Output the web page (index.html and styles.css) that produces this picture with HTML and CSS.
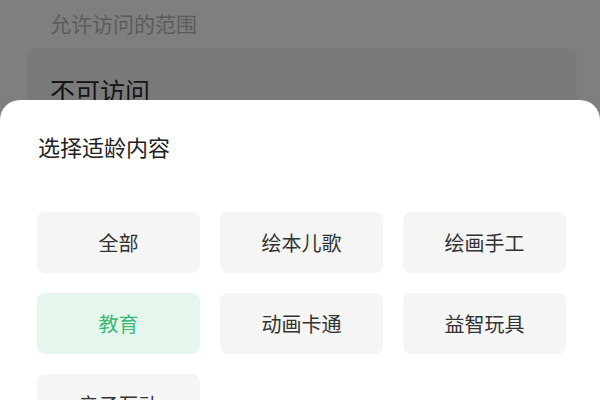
FILE: index.html
```html
<!DOCTYPE html>
<html lang="zh-CN">
<head>
    <meta charset="UTF-8">
    <meta name="viewport" content="width=device-width, initial-scale=1.0">
    <title>选择适龄内容</title>
    <link rel="stylesheet" href="styles.css">
</head>
<body>
    <div class="page">
        <div class="section-label">允许访问的范围</div>
        <div class="option-card">
            <span class="option-text">不可访问</span>
        </div>
    </div>

    <div class="mask"></div>

    <div class="sheet">
        <h2 class="sheet-title">选择适龄内容</h2>
        <div class="tag-grid">
            <div class="tag">全部</div>
            <div class="tag">绘本儿歌</div>
            <div class="tag">绘画手工</div>
            <div class="tag active">教育</div>
            <div class="tag">动画卡通</div>
            <div class="tag">益智玩具</div>
            <div class="tag">亲子互动</div>
        </div>
    </div>
</body>
</html>
```

FILE: styles.css
```css
* {
    margin: 0;
    padding: 0;
    box-sizing: border-box;
}

body {
    font-family: "Noto Sans CJK SC", "Noto Sans", sans-serif;
    background: #ffffff;
    color: #2a2a2a;
    width: 600px;
    height: 400px;
    overflow: hidden;
    position: relative;
}

/* Page behind the bottom sheet */
.page {
    padding: 8px 23px 0 27px;
}

.section-label {
    font-size: 21px;
    line-height: 30px;
    color: #b8b8b8;
    padding-left: 23px;
}

.option-card {
    margin-top: 10px;
    background: #f4f4f4;
    border-radius: 8px;
    padding: 25px 23px;
    height: 120px;
}

.option-text {
    font-size: 25px;
    line-height: 35px;
    color: #2a2a2a;
}

/* Dim layer */
.mask {
    position: absolute;
    top: 0;
    left: 0;
    width: 100%;
    height: 100%;
    background: rgba(0, 0, 0, 0.5);
}

/* Bottom sheet */
.sheet {
    position: absolute;
    top: 100px;
    left: 0;
    right: 0;
    bottom: 0;
    background: #ffffff;
    border-radius: 20px 20px 0 0;
    padding: 31px 34px 0 37px;
}

.sheet-title {
    font-size: 22px;
    font-weight: normal;
    line-height: 30px;
    color: #222222;
    padding-left: 1px;
}

.tag-grid {
    margin-top: 51px;
    display: grid;
    grid-template-columns: repeat(3, 163px);
    grid-auto-rows: 61px;
    gap: 20px 20px;
}

.tag {
    background: #f5f5f5;
    border-radius: 8px;
    display: flex;
    align-items: center;
    justify-content: center;
    font-size: 20px;
    color: #333333;
}

.tag.active {
    background: #e5f7ed;
    color: #3db874;
}
```
